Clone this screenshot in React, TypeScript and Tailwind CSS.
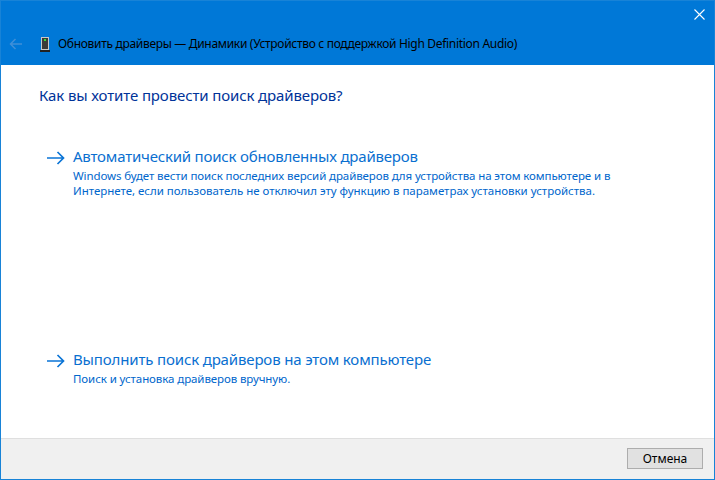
const font = "[font-family:'Noto_Sans','Open_Sans',sans-serif]"

function Arrow() {
    return (
        <svg width="18" height="14" viewBox="0 0 18 14" fill="none" stroke="#0a74d6" strokeWidth="1.7" className="shrink-0">
            <path d="M0 7H16.5M10.5 1L16.5 7L10.5 13" />
        </svg>
    )
}

interface TaskLinkProps {
    title: string
    titleClass: string
    lines: { text: string; className: string }[]
    className: string
}

function TaskLink({ title, titleClass, lines, className }: TaskLinkProps) {
    return (
        <div className={`flex items-start gap-[8px] ${className}`}>
            <div className="pt-[6px]">
                <Arrow />
            </div>
            <div className="text-[#0066cc]">
                <div className={`text-[15px] leading-[23px] text-[#0a6fd0] ${titleClass}`}>{title}</div>
                {lines.map((line) => (
                    <div key={line.text} className={`text-[11.5px] leading-[15px] ${line.className}`}>{line.text}</div>
                ))}
            </div>
        </div>
    )
}

export default function App() {
    return (
        <div className={`flex h-[480px] w-[715px] flex-col overflow-hidden border-x border-t border-b border-[#1883d7] bg-white ${font}`}>
            <div className="h-[64px] shrink-0 bg-[#0078d7]">
                <div className="flex h-[35px] justify-end pr-[9px] pt-[8px]">
                    <svg width="11" height="11" viewBox="0 0 11 11" stroke="white" strokeWidth="1.1" fill="none">
                        <path d="M0.5 0.5L10.5 10.5M10.5 0.5L0.5 10.5" />
                    </svg>
                </div>
                <div className="flex items-center pl-[8px]">
                    <svg width="13" height="12" viewBox="0 0 13 12" fill="none" stroke="#3f8fd8" strokeWidth="1.5">
                        <path d="M13 6H1.5M6.5 1L1.5 6L6.5 11" />
                    </svg>
                    <svg width="10" height="15" viewBox="0 0 10 15" className="ml-[18px]">
                        <rect x="1" y="0" width="8" height="13" fill="#c9c9c9" />
                        <rect x="2" y="1" width="6" height="11" fill="#3a3a3a" />
                        <rect x="4" y="2" width="2" height="2" fill="#35e03a" />
                        <rect x="0" y="13" width="10" height="2" fill="#222" />
                    </svg>
                    <span className="ml-[8px] text-[12px] leading-[16px] tracking-[-0.31px] text-black">
                        Обновить драйверы — Динамики (Устройство с поддержкой High Definition Audio)
                    </span>
                </div>
            </div>
            <div className="flex-1 pl-[38px] pt-[20px]">
                <div className="text-[15px] leading-[20px] tracking-[-0.12px] text-[#003399]">Как вы хотите провести поиск драйверов?</div>
                <TaskLink
                    className="ml-[8px] mt-[40px]"
                    title="Автоматический поиск обновленных драйверов"
                    titleClass="tracking-[-0.2px]"
                    lines={[
                        { text: "Windows будет вести поиск последних версий драйверов для устройства на этом компьютере и в", className: "tracking-[-0.1px]" },
                        { text: "Интернете, если пользователь не отключил эту функцию в параметрах установки устройства.", className: "tracking-[-0.02px]" },
                    ]}
                />
                <TaskLink
                    className="ml-[8px] mt-[150px]"
                    title="Выполнить поиск драйверов на этом компьютере"
                    titleClass="tracking-[-0.15px]"
                    lines={[{ text: "Поиск и установка драйверов вручную.", className: "tracking-[-0.09px]" }]}
                />
            </div>
            <div className="flex h-[41px] shrink-0 items-start justify-end border-t border-[#dfdfdf] bg-[#f0f0f0] pr-[11px] pt-[9px]">
                <button className="h-[21px] w-[76px] border border-[#adadad] bg-[#e1e1e1] text-[12px] leading-none text-black">Отмена</button>
            </div>
        </div>
    )
}
